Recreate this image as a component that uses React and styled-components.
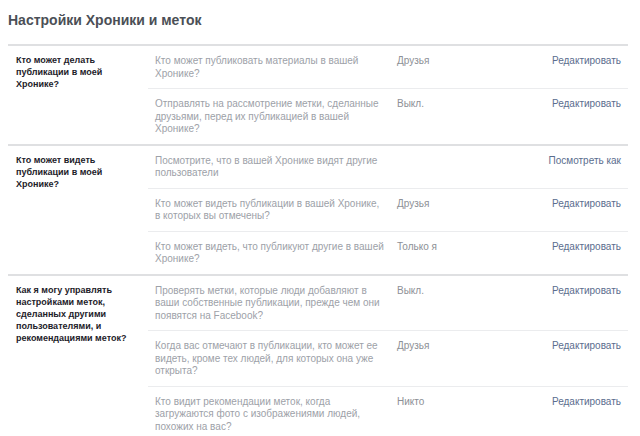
import styled, { createGlobalStyle } from "styled-components";

const SECTIONS = [
  {
    label: "Кто может делать публикации в моей Хронике?",
    rows: [
      {
        text: "Кто может публиковать материалы в вашей Хронике?",
        value: "Друзья",
        action: "Редактировать",
      },
      {
        text: "Отправлять на рассмотрение метки, сделанные друзьями, перед их публикацией в вашей Хронике?",
        value: "Выкл.",
        action: "Редактировать",
      },
    ],
  },
  {
    label: "Кто может видеть публикации в моей Хронике?",
    rows: [
      {
        text: "Посмотрите, что в вашей Хронике видят другие пользователи",
        value: "",
        action: "Посмотреть как",
      },
      {
        text: "Кто может видеть публикации в вашей Хронике, в которых вы отмечены?",
        value: "Друзья",
        action: "Редактировать",
      },
      {
        text: "Кто может видеть, что публикуют другие в вашей Хронике?",
        value: "Только я",
        action: "Редактировать",
      },
    ],
  },
  {
    label:
      "Как я могу управлять настройками меток, сделанных другими пользователями, и рекомендациями меток?",
    rows: [
      {
        text: "Проверять метки, которые люди добавляют в ваши собственные публикации, прежде чем они появятся на Facebook?",
        value: "Выкл.",
        action: "Редактировать",
      },
      {
        text: "Когда вас отмечают в публикации, кто может ее видеть, кроме тех людей, для которых она уже открыта?",
        value: "Друзья",
        action: "Редактировать",
      },
      {
        text: "Кто видит рекомендации меток, когда загружаются фото с изображениями людей, похожих на вас?",
        value: "Никто",
        action: "Редактировать",
      },
    ],
  },
];

export default function App() {
  return (
    <>
      <GlobalStyle />
      <Page>
        <Title>Настройки Хроники и меток</Title>
        <Table>
          {SECTIONS.map((section) => (
            <Section key={section.label}>
              <Label>{section.label}</Label>
              <Rows>
                {section.rows.map((row) => (
                  <Row key={row.text}>
                    <Question>{row.text}</Question>
                    <Value>{row.value}</Value>
                    <Action href="#">{row.action}</Action>
                  </Row>
                ))}
              </Rows>
            </Section>
          ))}
        </Table>
      </Page>
    </>
  );
}

const GlobalStyle = createGlobalStyle`
  body {
    margin: 0;
    background: #fff;
    font-family: "Liberation Sans", Arial, sans-serif;
  }
`;

const Page = styled.div`
  padding: 11px 12px 0 8px;
`;

const Title = styled.h1`
  margin: 0 0 15px;
  font-size: 14px;
  line-height: 18px;
  font-weight: bold;
  color: #4b4f56;
`;

const Table = styled.div`
  border-top: 2px solid #dfe0e2;
`;

const Section = styled.div`
  display: grid;
  grid-template-columns: 140px 1fr;
  border-bottom: 2px solid #dfe0e2;
`;

const Label = styled.div`
  padding: 8px 14px 0 8px;
  font-size: 9px;
  line-height: 12px;
  font-weight: bold;
  color: #1d2129;
`;

const Rows = styled.div`
  display: flex;
  flex-direction: column;
`;

const Row = styled.div`
  display: grid;
  grid-template-columns: 231px 1fr auto;
  column-gap: 11px;
  padding: 9px 7px 8px 7px;
  font-size: 10px;
  line-height: 12.5px;
  & + & {
    border-top: 1px solid #ebecee;
  }
`;

const Question = styled.div`
  color: #9da1a8;
`;

const Value = styled.div`
  color: #8d9096;
`;

const Action = styled.a`
  color: #5b6d8e;
  text-decoration: none;
  white-space: nowrap;
`;
